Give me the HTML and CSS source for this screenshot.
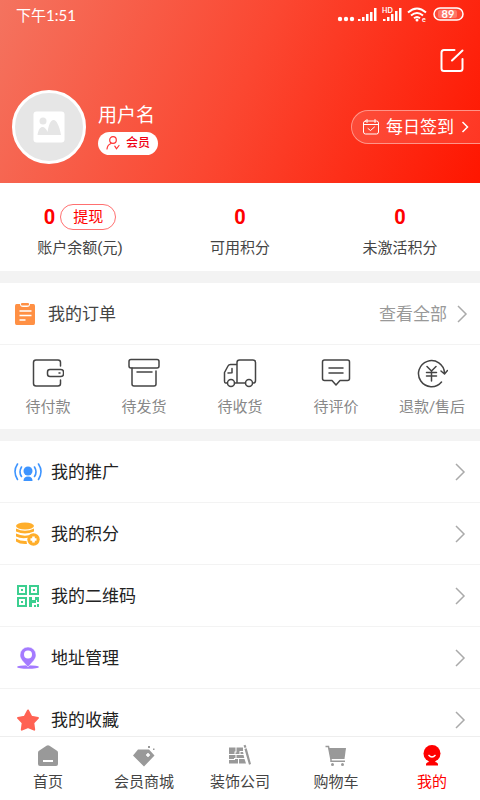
FILE: index.html
```html
<!DOCTYPE html>
<html lang="zh-CN">
<head>
<meta charset="utf-8">
<meta name="viewport" content="width=device-width, initial-scale=1">
<title>我的</title>
<link rel="stylesheet" href="styles.css">
</head>
<body>
<header class="hero">
  <div class="status">
    <span class="time">下午1:51</span>
    <svg class="signals" width="130" height="18" viewBox="0 0 130 18" fill="#fff" aria-hidden="true">
      <circle cx="3" cy="13" r="2.200"/><circle cx="9" cy="13" r="2.200"/><circle cx="15" cy="13" r="2.200"/>
      <path d="M21 13h2.500v2h-2.500zM25 11h2.500v4h-2.500zM29 8h2.500v7h-2.500zM33 6h2.500v9h-2.500zM37 2h2.500v13h-2.500z"/>
      <path d="M46 13h2.500v2h-2.500zM50 11h2.500v4h-2.500zM54 8h2.500v7h-2.500zM58 5h2.500v10h-2.500zM62 2h2.500v13h-2.500z"/>
      <text x="45" y="7" font-size="7" class="tiny">HD</text>
      <g fill="none" stroke="#fff" stroke-width="2"><path d="M71 6.500q9-8 18 0M74 9.500q6-5 12 0M77 12.300q3-2.500 6 0"/></g>
      <circle cx="80" cy="14" r="1.500"/>
      <text x="85" y="16" font-size="7" class="tiny">e</text>
      <rect x="97" y="2" width="29" height="12" rx="6" fill="#fff" fill-opacity=".15" stroke="#fff" stroke-width="1.500"/>
      <rect x="101" y="4" width="19" height="8" rx="2" fill-opacity=".25"/>
      <text x="111" y="12" font-size="11" text-anchor="middle" class="tiny">89</text>
    </svg>
  </div>
  <div class="tools">
    <button class="plain" aria-label="编辑资料">
      <svg width="24" height="24" viewBox="0 0 24 24" fill="none" stroke="#fff" stroke-width="2" stroke-linecap="round" stroke-linejoin="round"><path d="M14.500 2H4Q1.500 2 1.500 4.500v16Q1.500 23 4 23h16q2.500 0 2.500-2.500V11M22.500 2.500 12 12.500"/></svg>
    </button>
  </div>
  <div class="profile">
    <div class="avatar">
      <svg width="32" height="32" viewBox="0 0 32 32" aria-hidden="true"><rect x=".5" y=".5" width="31" height="31" rx="3" fill="#fff"/><circle cx="10" cy="10" r="3.500" fill="#e6e6e6"/><path d="M4.500 24c1-6 3-8 5-8s4 2 5 5c1-7 3-12 6-12s6 6 7.500 15z" fill="#e6e6e6"/></svg>
    </div>
    <div class="who">
      <h1>用户名</h1>
      <span class="member">
        <svg width="14" height="14" viewBox="0 0 14 14" fill="none" stroke="#f33" stroke-width="1.200" stroke-linecap="round" aria-hidden="true"><circle cx="7" cy="4" r="3.300"/><path d="M1 13c.3-3 1.800-4.700 4-5.500M8.800 10.200l1.700 2.600L13 9.500"/></svg>
        会员
      </span>
    </div>
    <button class="signin">
      <svg width="16" height="16" viewBox="0 0 16 16" fill="none" stroke="#fff" stroke-linecap="round" aria-hidden="true"><rect x=".5" y="2" width="15" height="13" rx="2"/><path d="M1 5.500h14M4 .5v3M12 .5v3M5 9.500l2.500 2L11.500 8"/></svg>
      每日签到
      <svg width="8" height="12" viewBox="0 0 8 12" fill="none" stroke="#fff" stroke-width="1.500" aria-hidden="true"><path d="M1.500 1 6.500 6l-5 5"/></svg>
    </button>
  </div>
</header>

<main>
  <section class="stats">
    <div class="stat"><p class="value"><strong>0</strong><button class="withdraw">提现</button></p><p>账户余额(元)</p></div>
    <div class="stat"><p class="value"><strong>0</strong></p><p>可用积分</p></div>
    <div class="stat"><p class="value"><strong>0</strong></p><p>未激活积分</p></div>
  </section>

  <section class="orders">
    <div class="orders-head">
      <svg width="22" height="24" viewBox="0 0 22 24" aria-hidden="true"><path d="M2.500 2H6q0 3 3 3h4q3 0 3-3h3.500Q21 2 21 4v17q0 2-1.500 2h-17Q1 23 1 21V4q0-2 1.500-2z" fill="#ff9044"/><rect x="7" y="1" width="8" height="2.500" rx="1" fill="#ff9044"/><path d="M5.500 9h12M5.500 13.500h12M5.500 18h6" stroke="#fff" stroke-width="1.700"/></svg>
      <h2>我的订单</h2>
      <a href="#all">查看全部<svg class="arrow" width="12" height="18" viewBox="0 0 12 18"><path d="M2 1l8 8-8 8"/></svg></a>
    </div>
    <nav class="order-types" aria-label="订单">
      <a href="#pay"><svg width="32" height="30" viewBox="0 0 32 30"><path d="M28.500 8V4.500q0-2.500-2.500-2.500H4Q1.500 2 1.500 4.500v21Q1.500 28 4 28h22q2.500 0 2.500-2.500V22"/><rect x="15.500" y="11.500" width="16" height="7" rx="2.500"/><path d="M27 15h1"/></svg>待付款</a>
      <a href="#ship"><svg width="32" height="30" viewBox="0 0 32 30"><rect x="1" y="1.500" width="30" height="8.500" rx="2"/><path d="M4 10v16q0 2 2 2h20q2 0 2-2V13M9 14h15"/></svg>待发货</a>
      <a href="#receive"><svg width="34" height="30" viewBox="0 0 34 30"><path d="M4 25H2.500Q1.500 25 1.500 23v-8.500L5 8q.8-1.500 2.500-1.500H14V25h-2.500M14 6.500V4.500Q14 2 16.500 2H30q2.500 0 2.500 2.500v18q0 2.500-2 2.500M14 25h8.500M9 10.500v4.300L5 15"/><circle cx="8" cy="25" r="3.500"/><circle cx="26" cy="25" r="3.500"/></svg>待收货</a>
      <a href="#review"><svg width="30" height="30" viewBox="0 0 30 30"><path d="M3.500 2h23q2 0 2 2v16.500q0 2-2 2H19L15 27l-4-4.500H3.500q-2 0-2-2V4q0-2 2-2zM8 10h14M8 15h14"/></svg>待评价</a>
      <a href="#refund"><svg width="32" height="30" viewBox="0 0 32 30"><path d="M25.500 24A13 13 0 1 1 28.500 15M25 13l3.500 3 3-3.500M11 8.500l4.500 4.500L20 8.500M15.500 13v10M10.500 14.500h10M10.500 18h10"/></svg>退款/售后</a>
    </nav>
  </section>

  <nav class="menu" aria-label="功能">
    <a href="#promo"><svg width="28" height="24" viewBox="0 0 28 24"><circle cx="14" cy="11" r="4.500" fill="#3d94ff"/><path d="M9.500 21q0-4.500 4.500-4.500t4.500 4.500z" fill="#3d94ff"/><g fill="none" stroke="#3d94ff" stroke-width="1.600" stroke-linecap="round"><path d="M7.500 7q-3 5 0 9.500M20.500 7q3 5 0 9.500M3.500 4q-5 7.500 0 15.500M24.500 4q5 7.500 0 15.500"/></g></svg><span>我的推广</span><svg class="arrow" width="12" height="18" viewBox="0 0 12 18"><path d="M2 1l8 8-8 8"/></svg></a>
    <a href="#points"><svg width="28" height="24" viewBox="0 0 28 24"><ellipse cx="11" cy="4" rx="9" ry="3.500" fill="#ffae2b"/><path d="M2 6.500q9 4.500 18 0v3q-9 4-18 0zM2 11.500q8 4 17 .500l-4 3.500Q8 17.500 2 14.500zM2 16.500q5 3 10.500 2.500l.5 3Q6 22.500 2 19.500z" fill="#ffae2b"/><circle cx="19.500" cy="17.500" r="6.200" fill="#ffae2b"/><path d="M19.500 14.500v6M16.500 17.500h6" stroke="#fff" stroke-width="2.600"/></svg><span>我的积分</span><svg class="arrow" width="12" height="18" viewBox="0 0 12 18"><path d="M2 1l8 8-8 8"/></svg></a>
    <a href="#qr"><svg width="28" height="24" viewBox="0 0 28 24"><g fill="none" stroke="#3ccf90" stroke-width="2"><path d="M4 2h8v8H4zM16 2h8v8h-8zM4 14h8v8H4z"/></g><path d="M7 5h2v2H7zM19 5h2v2h-2zM7 17h2v2H7zM15 13h3v3h3v-3h4v5h-2v-2h-1v3h-4v4h-3zM20 21h2v2h-2zM23 20h2v3h-2z" fill="#3ccf90"/></svg><span>我的二维码</span><svg class="arrow" width="12" height="18" viewBox="0 0 12 18"><path d="M2 1l8 8-8 8"/></svg></a>
    <a href="#address"><svg width="28" height="24" viewBox="0 0 28 24"><ellipse cx="14" cy="21" rx="11" ry="1.800" fill="#a47bff"/><path d="M14 21C9 15.500 6 13 6 9a8 8 0 0 1 16 0c0 4-3 6.500-8 12z" fill="#a47bff" stroke="#fff" stroke-width=".5"/><circle cx="14" cy="8.500" r="4" fill="#fff"/></svg><span>地址管理</span><svg class="arrow" width="12" height="18" viewBox="0 0 12 18"><path d="M2 1l8 8-8 8"/></svg></a>
    <a href="#favorites"><svg width="28" height="24" viewBox="0 0 28 24"><path d="M14 2.500l3.300 6.200 6.700 1.200-4.700 5 .9 6.800L14 19l-6.200 2.700.9-6.800-4.700-5 6.700-1.200z" fill="#ff6253" stroke="#ff6253" stroke-width="2" stroke-linejoin="round"/></svg><span>我的收藏</span><svg class="arrow" width="12" height="18" viewBox="0 0 12 18"><path d="M2 1l8 8-8 8"/></svg></a>
  </nav>
</main>

<nav class="tabs" aria-label="主导航">
  <a href="#home"><svg width="24" height="24" viewBox="0 0 24 24"><path d="M10.500 1.800q1.500-1 3 0l7.500 5q1 .7 1 2V20q0 2-2 2H4q-2 0-2-2V8.800q0-1.300 1-2z"/><path d="M7 17h10" stroke="#fff" stroke-width="2"/></svg>首页</a>
  <a href="#mall"><svg width="24" height="24" viewBox="0 0 24 24"><path d="M6 5.500h11l5.500 6L12 22.500 1 11.500zM16 2h2v2h-2zM21 4.500h1.500V6H21z"/><path d="M16 9v4M14 11h4" stroke="#fff" stroke-width="1.500"/></svg>会员商城</a>
  <a href="#decor"><svg width="24" height="24" viewBox="0 0 24 24"><path d="M1 3.500h6.500v4H6.500v2.500H1zM8.500 3.500H15v3.500h-3.500V10H7.500V8.500h1zM1 11h6.500v3H6v1H1zM8.500 11h7l.8 3H8.500zM1 16h6v-1h3v4.500H1zM11 15h5.500l1.500 4.500h-7zM12.500 8H15l.5 2h-3z"/><path d="M15.500 1.500l2-.7 1 2.500-2 .7zM16.500 5l2.200-.8L23 20l-2 .8z"/></svg>装饰公司</a>
  <a href="#cart"><svg width="24" height="24" viewBox="0 0 24 24"><path d="M4.500 4H22l-1.500 11H7z"/><path d="M1.500 2.500h3L7 15.500v1.800h14" fill="none" stroke="#999" stroke-width="1.500"/><circle cx="8.500" cy="20.500" r="1.500"/><circle cx="18.500" cy="20.500" r="1.500"/></svg>购物车</a>
  <a href="#me" class="current" aria-current="page"><svg width="24" height="24" viewBox="0 0 24 24"><circle cx="12" cy="9.500" r="8.500"/><path d="M8 16h8l-1 2q3 .5 3 2.500v1H6v-1Q6 18.500 9 18z"/><path d="M8.500 11q3.500 4 7 0" fill="none" stroke="#fff" stroke-width="1.300"/></svg>我的</a>
</nav>
</body>
</html>
```
FILE: styles.css
```css
* { box-sizing: border-box; }
body {
  margin: 0;
  background: #fff;
  color: #444;
  font: 15px/20px Roboto, "Noto Sans CJK SC", sans-serif;
  padding-bottom: 48px;
}
h1, h2, p { margin: 0; font-weight: 400; }
a { color: inherit; text-decoration: none; }
button { font: inherit; color: inherit; cursor: pointer; }
svg { display: block; flex: none; }

.hero {
  color: #fff;
  background: linear-gradient(115deg, #f4735f 0%, #fb4731 50%, #ff1600 100%);
  padding-bottom: 19px;
}
.status {
  display: flex;
  align-items: center;
  justify-content: space-between;
  height: 30px;
  padding: 0 13px 0 16px;
}
.time { font-family: Lato, "Noto Sans CJK SC", sans-serif; }
.tiny { font-family: Lato, sans-serif; font-weight: 700; }
.tools {
  display: flex;
  justify-content: flex-end;
  padding: 18px 16px 0;
}
.plain { border: 0; background: none; padding: 0; }
.profile {
  display: flex;
  align-items: center;
  padding: 18px 0 0 12px;
}
.avatar {
  display: grid;
  place-items: center;
  width: 74px;
  height: 74px;
  border: 3px solid #fff;
  border-radius: 50%;
  background: #e6e6e6;
}
.who { margin-left: 12px; }
.who h1 { font-size: 19px; line-height: 32px; }
.member {
  display: flex;
  align-items: center;
  gap: 6px;
  height: 23px;
  padding: 0 8px;
  border-radius: 12px;
  background: #fff;
  color: #f00014;
  font-size: 12px;
  font-weight: 500;
}
.signin {
  display: flex;
  align-items: center;
  gap: 7px;
  height: 34px;
  margin-left: auto;
  padding: 0 11px;
  border: 1px solid #ff9488;
  border-right: 0;
  border-radius: 17px 0 0 17px;
  background: rgba(255, 255, 255, .13);
  font-size: 17px;
}

.stats {
  display: grid;
  grid-template-columns: repeat(3, 1fr);
  padding: 21px 0 13px;
  border-bottom: 12px solid #f3f3f3;
  text-align: center;
}
.value {
  display: flex;
  align-items: center;
  justify-content: center;
  gap: 5px;
  height: 26px;
  margin-bottom: 8px;
  color: #f00;
}
.value strong { font-size: 20px; }
.withdraw {
  height: 26px;
  padding: 0 12px;
  border: 1px solid #ff7070;
  border-radius: 13px;
  background: none;
  line-height: 20px;
}

.orders { border-bottom: 12px solid #f3f3f3; }
.orders-head {
  display: flex;
  align-items: center;
  gap: 12px;
  height: 62px;
  padding: 0 12px 0 14px;
  border-bottom: 1px solid #f3f3f3;
  font-size: 17px;
}
.orders-head h2 { font-size: 17px; }
.orders-head a {
  display: flex;
  align-items: center;
  gap: 9px;
  margin-left: auto;
  color: #999;
}
.arrow { fill: none; stroke: #aaa; stroke-width: 1.500; }
.order-types {
  display: grid;
  grid-template-columns: repeat(5, 1fr);
  padding: 13px 0 12px;
  color: #888;
}
.order-types a {
  display: flex;
  flex-direction: column;
  align-items: center;
  gap: 9px;
}
.order-types svg {
  fill: none;
  stroke: #444;
  stroke-width: 1.500;
  stroke-linecap: round;
  stroke-linejoin: round;
}

.menu a {
  display: flex;
  align-items: center;
  gap: 9px;
  height: 62px;
  padding: 0 14px;
  border-bottom: 1px solid #f3f3f3;
  color: #222;
  font-size: 17px;
}
.menu .arrow { margin-left: auto; }

.tabs {
  position: fixed;
  inset: auto 0 0;
  display: grid;
  grid-template-columns: repeat(5, 1fr);
  height: 64px;
  padding-top: 7px;
  border-top: 1px solid #eee;
  background: #fff;
}
.tabs a {
  display: flex;
  flex-direction: column;
  align-items: center;
  gap: 4px;
}
.tabs svg { fill: #999; }
.tabs .current { color: #f00; }
.tabs .current svg { fill: #f00; }
```
